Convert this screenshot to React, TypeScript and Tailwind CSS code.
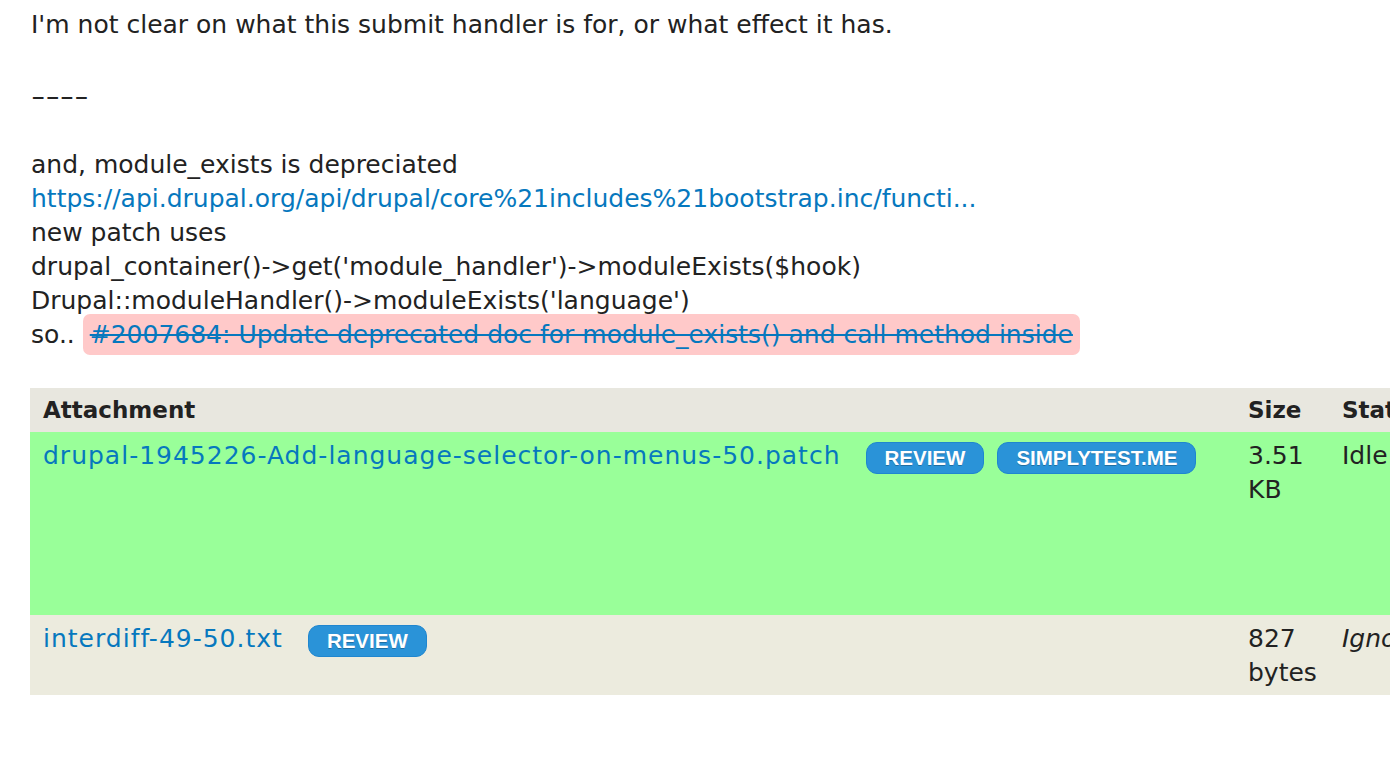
const ROWS = [
  {
    name: "drupal-1945226-Add-language-selector-on-menus-50.patch",
    badges: ["REVIEW", "SIMPLYTEST.ME"],
    size: ["3.51", "KB"],
    status: "Idle",
    italic: false,
    bg: "bg-[#99ff99]",
    h: "h-[183px]",
  },
  {
    name: "interdiff-49-50.txt",
    badges: ["REVIEW"],
    size: ["827", "bytes"],
    status: "Ignored",
    italic: true,
    bg: "bg-[#ecebde]",
    h: "h-[80px]",
  },
];

function Badge({ label }: { label: string }) {
  return (
    <span className="inline-flex items-center h-[32px] px-[18px] rounded-[11px] bg-[#2a93d8] border border-[#1f86cf] text-white font-bold text-[20.5px] leading-none font-['Liberation_Sans',Arial,sans-serif] [text-shadow:0_1px_0_rgba(0,0,0,0.25)]">
      {label}
    </span>
  );
}

export default function App() {
  return (
    <div className="w-[1390px] h-[760px] overflow-hidden bg-white font-['DejaVu_Sans',sans-serif] text-[25px] leading-[34px] text-[#222]">
      <div className="pl-[31px] pt-[8px]">
        <p>I'm not clear on what this submit handler is for, or what effect it has.</p>
        <p className="mt-[38px]">
          <span className="inline-block scale-x-[1.6] origin-left">----</span>
        </p>
        <p className="mt-[34px]">
          and, module_exists is depreciated
          <br />
          <a className="text-[#0678be]">https://api.drupal.org/api/drupal/core%21includes%21bootstrap.inc/functi...</a>
          <br />
          new patch uses
          <br />
          drupal_container()-&gt;get('module_handler')-&gt;moduleExists($hook)
          <br />
          Drupal::moduleHandler()-&gt;moduleExists('language')
          <br />
          so..{" "}
          <a className="text-[#0678be] line-through bg-[#ffc9c9] rounded-[7px] px-[7px] py-[6px]">
            #2007684: Update deprecated doc for module_exists() and call method inside
          </a>
        </p>
      </div>

      <div className="ml-[30px] mt-[36px] w-[1500px]">
        <table className="table-fixed w-full border-collapse">
          <colgroup>
            <col className="w-[1205px]" />
            <col className="w-[107px]" />
            <col />
          </colgroup>
          <thead>
            <tr className="bg-[#e8e7df] h-[44px] text-left text-[23px]">
              <th className="pl-[13px] font-bold">Attachment</th>
              <th className="pl-[13px] font-bold">Size</th>
              <th className="font-bold">Status</th>
            </tr>
          </thead>
          <tbody>
            {ROWS.map((r) => (
              <tr key={r.name} className={`${r.bg} ${r.h} align-top`}>
                <td className="pl-[13px] pt-[7px]">
                  <div className="flex items-start">
                    <a className="text-[#0678be] tracking-[1px]">{r.name}</a>
                    <div className="flex gap-[13px] ml-[25px] mt-[3px]">
                      {r.badges.map((b) => (
                        <Badge key={b} label={b} />
                      ))}
                    </div>
                  </div>
                </td>
                <td className="pl-[13px] pt-[7px]">
                  {r.size[0]}
                  <br />
                  {r.size[1]}
                </td>
                <td className={`pt-[7px] ${r.italic ? "italic" : ""}`}>{r.status}</td>
              </tr>
            ))}
          </tbody>
        </table>
      </div>
    </div>
  );
}
